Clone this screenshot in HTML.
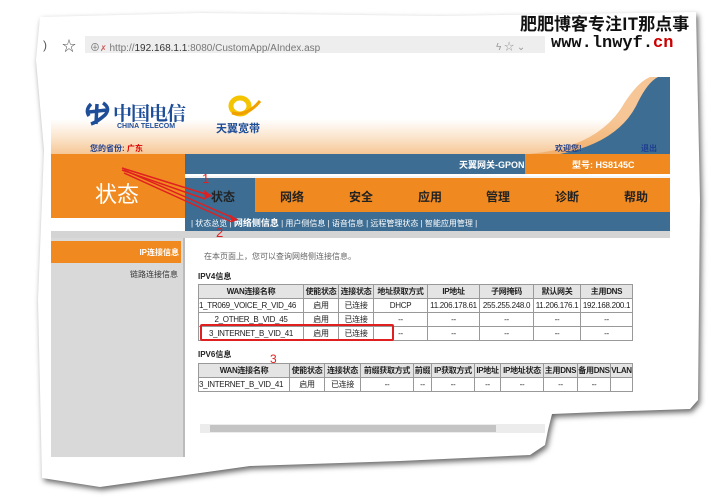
<!DOCTYPE html>
<html><head><meta charset="utf-8"><style>
*{margin:0;padding:0;box-sizing:border-box}
body{width:709px;height:499px;background:#fff;position:relative;overflow:hidden;font-family:"Liberation Sans","Noto Sans CJK SC",sans-serif}
.a{position:absolute}
.paper{position:absolute;left:0;top:0;width:709px;height:499px;filter:drop-shadow(2px 3px 3px rgba(0,0,0,.6))}
.pc{position:absolute;left:0;top:0;width:709px;height:499px;background:#fff;clip-path:polygon(40px 17px,200px 13px,440px 16px,696px 12px,700px 200px,698px 400px,690px 409px,600px 412px,552px 414px,548px 430px,545px 445px,530px 455px,400px 461px,250px 466px,100px 487px,42px 478px,38px 300px,44px 150px,36px 60px)}
table{border-collapse:collapse;position:absolute;table-layout:fixed}
td{border:1px solid #999;text-align:center;height:14px;white-space:nowrap;overflow:hidden;color:#222;padding:0;font-size:8px;letter-spacing:-0.3px}
tr.h td{background:#e4e4e4;font-weight:bold}
.nav span{position:absolute;top:10px;font-size:12px;font-weight:bold;color:#222}
</style></head><body>
<div class="paper"><div class="pc"></div></div>
<!-- watermark -->
<div class="a" style="left:520px;top:10px;font-size:17px;font-weight:bold;color:#111;font-family:'Noto Sans CJK SC',sans-serif;letter-spacing:0px">肥肥博客专注IT那点事</div>
<div class="a" style="left:551px;top:34px;font-size:17px;font-weight:bold;color:#111;font-family:'Liberation Mono',monospace">www.<span>lnwyf.</span><span style="color:#c00">cn</span></div>
<!-- browser bar -->
<div class="a" style="left:43px;top:38px;font-size:12px;color:#555">)</div>
<div class="a" style="left:62px;top:36px;font-size:14px;color:#555">☆</div>
<div class="a" style="left:85px;top:36px;width:460px;height:17px;background:#eeeeee"></div>
<div class="a" style="left:90px;top:39px;font-size:10px;color:#777">⊕<span style="color:#c55;font-size:8px">✗</span> http://<span style="color:#333">192.168.1.1</span>:8080/CustomApp/AIndex.asp</div>
<div class="a" style="left:496px;top:38px;font-size:10px;color:#999">ϟ ☆ ⌄</div>
<!-- header -->
<div class="a" style="left:51px;top:77px;width:619px;height:77px;background:linear-gradient(#fff 55%,#fbe3c9 80%,#f6c796)"></div>
<svg class="a" style="left:490px;top:77px" width="180" height="77"><path d="M180 0 L180 77 L40 77 Q110 70 135 25 Q148 5 160 0Z" fill="#f0a050" opacity=".6"/><path d="M180 0 L180 77 L70 77 Q130 65 148 25 Q158 5 168 0Z" fill="#3d6d93"/></svg>
<svg class="a" style="left:83px;top:100px" width="30" height="26"><path d="M8 4 Q2 10 6 16 M20 3 Q28 8 22 15 Q14 22 8 24 M6 12 L24 10 M14 4 L13 24" stroke="#1f4e99" stroke-width="3.5" fill="none"/></svg>
<div class="a" style="left:113px;top:99px;font-size:19px;font-weight:bold;color:#1f4e99;font-family:'Noto Serif CJK SC',serif;letter-spacing:-1px">中国电信</div>
<div class="a" style="left:117px;top:123px;font-size:7px;font-weight:bold;color:#1f4e99">CHINA TELECOM</div>
<svg class="a" style="left:222px;top:95px" width="40" height="24"><ellipse cx="18" cy="11" rx="9" ry="8" fill="none" stroke="#f5c400" stroke-width="5"/><path d="M10 18 Q25 22 38 6" stroke="#f0a000" stroke-width="3" fill="none"/></svg>
<div class="a" style="left:216px;top:120px;font-size:11px;font-weight:bold;color:#1f4e99">天翼宽带</div>
<div class="a" style="left:90px;top:143px;font-size:8px;font-weight:bold;color:#1f3f8f">您的省份: <span style="color:#d00">广东</span></div>
<div class="a" style="left:555px;top:143px;font-size:8px;font-weight:bold;color:#1f3f8f">欢迎您!</div>
<div class="a" style="left:641px;top:143px;font-size:8px;font-weight:bold;color:#1f3f8f">退出</div>
<!-- orange/blue bars -->
<div class="a" style="left:51px;top:154px;width:134px;height:64px;background:#f08a20"></div>
<div class="a" style="left:95px;top:177px;font-size:22px;color:#fff">状态</div>
<div class="a" style="left:185px;top:154px;width:485px;height:20px;background:#3d6d93"></div>
<div class="a" style="left:459px;top:158px;font-size:9px;font-weight:bold;color:#fff">天翼网关-GPON</div>
<div class="a" style="left:525px;top:154px;width:145px;height:20px;background:#f08a20"></div>
<div class="a" style="left:572px;top:158px;font-size:9px;font-weight:bold;color:#fff">型号: HS8145C</div>
<div class="a nav" style="left:185px;top:176px;width:485px;height:36px;background:#f08a20;border-top:2px solid #f5f5f5">
<div class="a" style="left:0;top:0;width:70px;height:36px;background:#3d6d93"></div>
<span style="left:26px">状态</span><span style="left:95px">网络</span><span style="left:164px">安全</span><span style="left:233px">应用</span><span style="left:301px">管理</span><span style="left:370px">诊断</span><span style="left:439px">帮助</span></div>
<div class="a" style="left:185px;top:212px;width:485px;height:19px;background:#3d6d93;font-size:8px;color:#fff;padding:4px 6px;white-space:nowrap">| 状态总览 | <b style="font-size:9px">网络侧信息</b> | 用户侧信息 | 语音信息 | 远程管理状态 | 智能应用管理 |</div>
<div class="a" style="left:51px;top:231px;width:619px;height:7px;background:#d4d4d4"></div>
<!-- sidebar -->
<div class="a" style="left:51px;top:238px;width:134px;height:219px;background:#d9d9d9;border-right:2px solid #bbb"></div>
<div class="a" style="left:51px;top:241px;width:130px;height:22px;background:#f08a20;color:#fff;font-size:8px;font-weight:bold;text-align:right;padding:6px 2px 0 0">IP连接信息</div>
<div class="a" style="left:130px;top:269px;font-size:8px;color:#333">链路连接信息</div>
<!-- content -->
<div class="a" style="left:204px;top:251px;font-size:8px;color:#666">在本页面上，您可以查询网络侧连接信息。</div>
<div class="a" style="left:198px;top:271px;font-size:8px;font-weight:bold;color:#222">IPV4信息</div>
<table style="left:198px;top:284px;width:434px">
<colgroup><col style="width:105px"><col style="width:35px"><col style="width:35px"><col style="width:54px"><col style="width:52px"><col style="width:54px"><col style="width:47px"><col style="width:52px"></colgroup>
<tr class="h"><td>WAN连接名称</td><td>使能状态</td><td>连接状态</td><td>地址获取方式</td><td>IP地址</td><td>子网掩码</td><td>默认网关</td><td>主用DNS</td></tr>
<tr><td style="text-align:left">1_TR069_VOICE_R_VID_46</td><td>启用</td><td>已连接</td><td>DHCP</td><td>11.206.178.61</td><td>255.255.248.0</td><td>11.206.176.1</td><td>192.168.200.1</td></tr>
<tr><td>2_OTHER_B_VID_45</td><td>启用</td><td>已连接</td><td>--</td><td>--</td><td>--</td><td>--</td><td>--</td></tr>
<tr><td>3_INTERNET_B_VID_41</td><td>启用</td><td>已连接</td><td>--</td><td>--</td><td>--</td><td>--</td><td>--</td></tr>
</table>
<div class="a" style="left:200px;top:324px;width:194px;height:17px;border:2px solid #e02020;border-radius:2px"></div>
<div class="a" style="left:198px;top:349px;font-size:8px;font-weight:bold;color:#222">IPV6信息</div>
<div class="a" style="left:270px;top:352px;font-size:12px;color:#e02020">3</div>
<table style="left:198px;top:363px;width:434px">
<colgroup><col style="width:91px"><col style="width:35px"><col style="width:36px"><col style="width:53px"><col style="width:18px"><col style="width:43px"><col style="width:26px"><col style="width:43px"><col style="width:34px"><col style="width:33px"><col style="width:22px"></colgroup>
<tr class="h"><td>WAN连接名称</td><td>使能状态</td><td>连接状态</td><td>前缀获取方式</td><td>前缀</td><td>IP获取方式</td><td>IP地址</td><td>IP地址状态</td><td>主用DNS</td><td>备用DNS</td><td>VLAN</td></tr>
<tr><td style="text-align:left">3_INTERNET_B_VID_41</td><td>启用</td><td>已连接</td><td>--</td><td>--</td><td>--</td><td>--</td><td>--</td><td>--</td><td>--</td><td></td></tr>
</table>
<!-- scrollbar -->
<div class="a" style="left:200px;top:424px;width:345px;height:9px;background:#ececec"></div>
<div class="a" style="left:210px;top:425px;width:286px;height:7px;background:#c4c4c4"></div>
<!-- annotations -->
<svg class="a" style="left:0;top:0" width="709" height="499">
<path d="M122 168 L212 196 M122 170 L205 199" stroke="#e02020" stroke-width="1.5" fill="none"/>
<path d="M212 196 L204 190 L205 199Z" fill="#e02020"/>
<path d="M124 170 L238 220 M124 173 L232 222" stroke="#e02020" stroke-width="1.5" fill="none"/>
<path d="M238 220 L229 214 L232 222Z" fill="#e02020"/>
</svg>
<div class="a" style="left:202px;top:171px;font-size:13px;color:#e02020">1</div>
<div class="a" style="left:216px;top:225px;font-size:13px;color:#e02020">2</div>
</body></html>
